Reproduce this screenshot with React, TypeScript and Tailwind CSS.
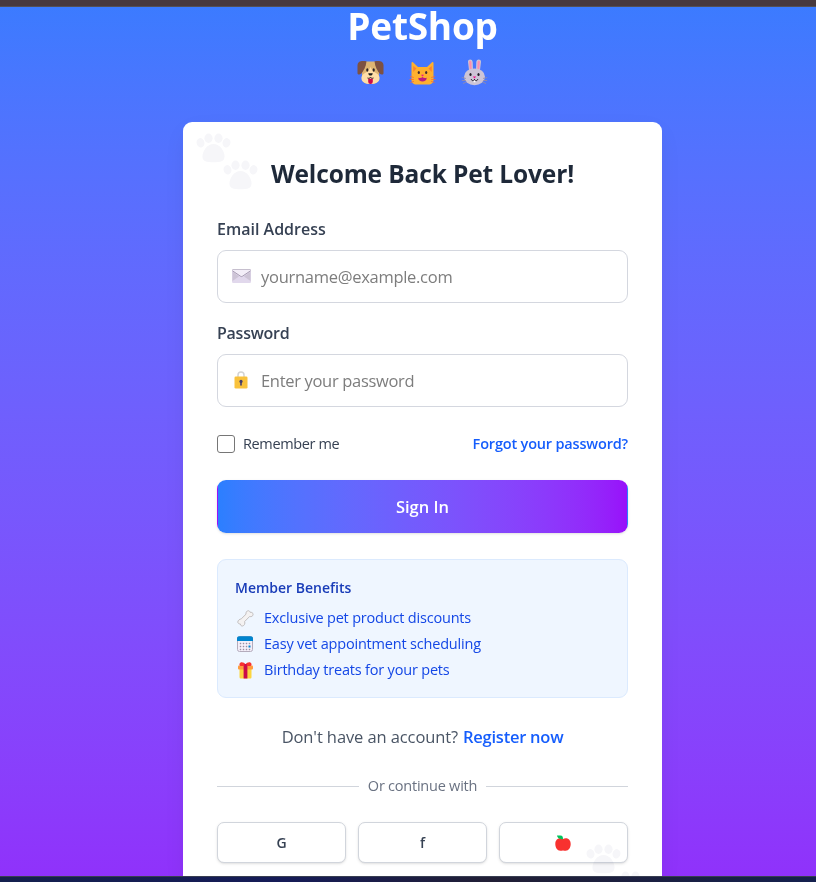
import type { ReactNode } from "react";

function Dog() {
  return (
    <svg className="h-[27px] w-[27px]" viewBox="0 0 27 27">
      <path d="M5 2.500h17v16c0 4.500-3 6.500-8.500 6.500S5 23 5 18.500z" fill="#deb573" />
      <path d="M13.500 8c-1.500 3.500-3 4.500-5.500 6-2.700 1.600-4 3.500-3.500 6 .6 3.500 4 5 9 5s8.400-1.500 9-5c.5-2.500-.8-4.400-3.500-6-2.500-1.500-4-2.500-5.500-6z" fill="#ffdea7" />
      <path d="M9.500 2.300C4 1.300.500 2.500.500 6.500v7.700c0 1.600 2.500 1.800 3.900.3C6.500 12 9 8 9.500 2.300z" fill="#7d5142" />
      <path d="M17.500 2.300c5.500-1 9 .2 9 4.200v7.700c0 1.600-2.500 1.800-3.900.3-2.100-2.500-4.600-6.500-5.100-12.200z" fill="#7d5142" />
      <ellipse cx="10.300" cy="11" rx="1.100" ry="1.700" fill="#292126" />
      <ellipse cx="16.700" cy="11" rx="1.100" ry="1.700" fill="#292126" />
      <path d="M11.300 14.300h4.400c0 1.500-1 2.300-2.200 2.300s-2.200-.8-2.200-2.300z" fill="#1c1c1c" />
      <path d="M10.500 19c1.300.6 2.400.3 3-.7.600 1 1.700 1.300 3 .7" stroke="#1c1c1c" strokeWidth="1" fill="none" />
      <path d="M11.200 19.700h4.600v3a2.300 2.300 0 0 1-4.600 0z" fill="#ca0b4a" />
    </svg>
  );
}

function Cat() {
  return (
    <svg className="h-[27px] w-[27px]" viewBox="0 0 27 27">
      <path d="M2.500 4c0-1 1-1.300 1.700-.6L9 8h9l4.800-4.600c.7-.7 1.700-.4 1.700.6v16.500c0 3.500-2 5-5 5h-12c-3 0-5-1.500-5-5z" fill="#ffb02e" />
      <path d="M4.200 7 7.500 9.500 4.200 13zM22.800 7l-3.300 2.500 3.300 3.500z" fill="#ff822d" />
      <path d="m1 17.500 3.800 1M.5 20.500h4.300M1.500 23.500l3.500-1.200M26 17.500l-3.800 1m4.300 2h-4.300m3.300 3-3.500-1.200" stroke="#f46a38" strokeWidth=".8" />
      <ellipse cx="9.800" cy="13.500" rx="1.100" ry="1.600" fill="#402a32" />
      <ellipse cx="17.200" cy="13.500" rx="1.100" ry="1.600" fill="#402a32" />
      <path d="M12 15.800h3l-1.500 1.700z" fill="#f70a8d" />
      <path d="M9.300 18.700c1.700.7 3.200.4 4.200-.6 1 1 2.500 1.300 4.200.6.300 5-8.700 5-8.400 0z" fill="#bb1d80" />
    </svg>
  );
}

function Rabbit() {
  return (
    <svg className="h-[27px] w-[27px]" viewBox="0 0 27 27">
      <path d="M7 2.700c0-3 4.500-3 4.700.3L12 11H8zM20 2.700c0-3-4.500-3-4.700.3L15 11h4z" fill="#cdc4d6" />
      <path d="M8.100 3.200c0-2 2.300-2 2.400.2l.2 7H8.800zM18.900 3.200c0-2-2.300-2-2.400.2l-.2 7h1.900z" fill="#ff8fae" />
      <ellipse cx="13.500" cy="17.800" rx="10.500" ry="8.400" fill="#cdc4d6" />
      <path d="m.8 18.500 4.200 1M.8 21.500H5M2 24.500l3.500-1.500m20.700-4.500-4.200 1m4.200 2H22m3 3-3.500-1.500" stroke="#998ea4" strokeWidth=".8" />
      <ellipse cx="9.500" cy="15.500" rx="1.100" ry="1.600" fill="#211c26" />
      <ellipse cx="17.500" cy="15.500" rx="1.100" ry="1.600" fill="#211c26" />
      <path d="M11.800 17.600h3.400l-1.700 2z" fill="#f70a8d" />
      <path d="M10.300 20c0 2.200 3.200 2.200 3.200 0 0 2.200 3.200 2.200 3.200 0" stroke="#211c26" strokeWidth="1" fill="none" />
      <path d="M12.600 21.600h1.800v1.700h-1.800z" fill="#fff" />
    </svg>
  );
}

function Paw() {
  return (
    <svg className="h-[30px] w-[35px]" viewBox="0 0 35 30">
      <g fill="#f6f6f9">
        <ellipse cx="4.500" cy="9.800" rx="3.900" ry="4.700" transform="rotate(-12 4.500 9.800)" />
        <ellipse cx="12.500" cy="5.200" rx="4.100" ry="4.700" />
        <ellipse cx="22.500" cy="5.200" rx="4.100" ry="4.700" />
        <ellipse cx="30.500" cy="9.800" rx="3.900" ry="4.700" transform="rotate(12 30.500 9.800)" />
        <path d="M17.500 11C11 11 6.500 18 6.500 23.500c0 5 4 5.700 11 5.700s11-.7 11-5.700C28.500 18 24 11 17.500 11z" />
      </g>
    </svg>
  );
}

function Envelope() {
  return (
    <svg className="h-[15px] w-[19px]" viewBox="0 0 19 15">
      <rect width="19" height="14" rx="1.300" fill="#e1d8ec" />
      <path d="M.5 2.500 7 7.500.5 12zM18.500 2.500 12 7.500l6.500 4.500z" fill="#cdc4d6" />
      <path d="M0 1.300C0 .5.500 0 1.300 0h16.400c.8 0 1.300.5 1.300 1.300L10.500 7c-.7.5-1.300.5-2 0z" fill="#f3eef8" />
      <path d="M.3 1.700 8.500 7.200c.7.500 1.300.5 2 0l8.200-5.500" stroke="#998ea4" strokeWidth=".8" fill="none" />
      <path d="M.5.400h18" stroke="#b4acbc" strokeWidth=".8" />
    </svg>
  );
}

function Lock() {
  return (
    <svg className="mr-px mb-px h-[18px] w-[14px]" viewBox="0 0 14 18">
      <path d="M4 7V4c0-4 6-4 6 0v3" stroke="#d3d3d3" strokeWidth="1.500" fill="none" />
      <rect x=".5" y="5.500" width="13" height="12" rx="1.300" fill="#f9c23c" />
      <circle cx="7" cy="10.400" r="1.600" fill="#433b6b" />
      <rect x="6.200" y="11" width="1.600" height="3.800" rx=".8" fill="#433b6b" />
    </svg>
  );
}

function Bone() {
  return (
    <svg className="h-[17px] w-[17px]" viewBox="0 0 17 17">
      <path d="M4.200 8.900 9 4.200C8.600 2.400 9.800.8 11.200.7c1 0 1.600.6 1.900 1.600 1.500-.2 3 .5 3 2 0 2-2 2.700-3.500 2.200L7.600 11.600c.8 1.900-.3 4.200-2.100 4.400-1.200.1-2-.6-2.100-2-1.600 0-2.600-.8-2.600-2 .1-1.800 1.900-2.800 3.400-3.100z" fill="#f4f2f2" stroke="#bcb8b8" strokeWidth=".9" />
    </svg>
  );
}

function Calendar() {
  return (
    <svg className="h-[16px] w-[16px]" viewBox="0 0 16 16">
      <rect x=".5" y=".5" width="15" height="15" rx="2" fill="#f3eef8" stroke="#b4acbc" strokeWidth="1" />
      <path d="M0 5V2.500C0 1 1 .3 2.500.3h11C15 .3 16 1 16 2.500V5z" fill="#0084ce" />
      <path d="M6 7h1v1H6zM9 7h1v1H9zM12 7h1v1h-1zM3 7h1v1H3zM3 10h1v1H3zM6 10h1v1H6zM9 10h1v1H9zM3 13h1v1H3zM6 13h1v1H6zM9 13h1v1H9zM12 13h1v1h-1z" fill="#998ea4" stroke="#998ea4" strokeWidth=".4" />
      <path d="M11.500 9.500h2v2h-2z" fill="#0084ce" />
    </svg>
  );
}

function Gift() {
  return (
    <svg className="h-[17px] w-[15px]" viewBox="0 0 15 17">
      <path d="M1.500 6h12v9c0 1-.5 1.500-1.500 1.500H3c-1 0-1.500-.5-1.500-1.500z" fill="#fcd53f" />
      <rect y="3.500" width="15" height="4" rx="1" fill="#ff9b3d" />
      <path d="M5.600 4h3.800v12.500H5.600z" fill="#ca0b4a" />
      <path d="M7.500 2.300C6-.1 2-.6 1.500 2c-.2 1.500.6 2 1.800 2h8.400c1.200 0 2-.5 1.800-2C13-.6 9-.1 7.500 2.300z" fill="#f8312f" />
      <path d="M6.300 2h2.400v2.500H6.300z" fill="#ca0b4a" />
    </svg>
  );
}

function Apple() {
  return (
    <svg className="mr-[2px] h-[16px] w-[16px]" viewBox="0 0 16 16">
      <path d="M8 4.100C10.500 2.300 15.700 3.300 15.700 9c0 3.500-2 6.700-5 6.700-1 0-1.700-.3-2.700-.3s-1.700.3-2.700.3c-3 0-5-3.200-5-6.700 0-5.700 5.200-6.700 7.700-4.900z" fill="#f8312f" />
      <path d="M2 .5h3.500C7.500.5 8 2 8 4.200 5 4.200 2.500 3.500 2 .5z" fill="#00c45c" />
    </svg>
  );
}

function Field({ label, labelClass, placeholder, inputClass, icon }: { label: string; labelClass: string; placeholder: string; inputClass: string; icon: ReactNode }) {
  return (
    <label className="block">
      <span className={`block h-[25px] text-[16px] leading-[25px] font-semibold text-[#364153] ${labelClass}`}>{label}</span>
      <span className="mt-2 flex h-[53px] items-center rounded-[9px] border border-[#d4d7df] pl-[12px]">
        <span className="flex w-[23px] justify-center">{icon}</span>
        <input className={`ml-[8px] h-[48px] min-w-0 flex-1 bg-transparent text-[16.500px] text-[#364153] outline-none placeholder:text-[#7d7d7d] ${inputClass}`} placeholder={placeholder} />
      </span>
    </label>
  );
}

function Benefit({ icon, children }: { icon: ReactNode; children: ReactNode }) {
  return (
    <li className="flex h-[26px] items-center">
      <span className="flex w-[20px] justify-center">{icon}</span>
      <span className="ml-[9px] text-[14.500px] tracking-[-0.19px] whitespace-nowrap text-[#1447e6]">{children}</span>
    </li>
  );
}

const social = "flex h-[41px] items-center justify-center rounded-[7px] border border-[#d1d5dc] bg-white text-[14px] font-semibold text-[#364153] shadow-sm";

export default function App() {
  return (
    <div className="flex h-[882px] w-full flex-col overflow-hidden font-['Open_Sans','Noto_Sans',sans-serif]">
      <div className="h-[7px] shrink-0 border-b border-[#555054] bg-[#48393d]" />
      <main className="h-[869px] shrink-0 bg-[linear-gradient(to_bottom_in_oklab,#2b7fff_-8%,#9810fa_118%)] pl-[183px]">
        <header className="flex h-[115px] w-[479px] flex-col items-center">
          <h1 className="-mt-[7px] h-[47px] text-[37px] leading-[51px] font-bold tracking-[-0.25px] text-white">PetShop</h1>
          <div className="mt-[12px] flex gap-[25px]">
            <Dog />
            <Cat />
            <Rabbit />
          </div>
        </header>
        <section className="relative h-[760px] w-[479px] overflow-hidden rounded-t-[9px] bg-white px-[34px] pt-[34px] shadow-[0_8px_24px_-4px_rgba(0,0,0,0.08)]">
          <div className="absolute top-[11px] left-[13px]"><Paw /></div>
          <div className="absolute top-[38px] left-[40px]"><Paw /></div>
          <h2 className="relative h-[38px] text-center text-[24.500px] leading-[36px] font-bold tracking-[-0.13px] whitespace-nowrap text-[#1e2939]">Welcome Back Pet Lover!</h2>
          <form className="mt-[23px]" onSubmit={(e) => e.preventDefault()}>
            <Field label="Email Address" labelClass="" placeholder="yourname@example.com" inputClass="tracking-[-0.28px]" icon={<Envelope />} />
            <div className="h-[18px]" />
            <Field label="Password" labelClass="tracking-[-0.25px]" placeholder="Enter your password" inputClass="tracking-[-0.32px]" icon={<Lock />} />
            <div className="mt-[24px] flex h-[26px] items-center justify-between text-[14.500px]">
              <label className="flex items-center gap-[8px] text-[#364153]">
                <input type="checkbox" className="h-[18px] w-[18px] appearance-none rounded-[3px] border border-[#767676] bg-white" />
                <span className="tracking-[-0.36px]">Remember me</span>
              </label>
              <a className="font-[550] tracking-[-0.18px] text-[#155dfc]">Forgot your password?</a>
            </div>
            <button className="mt-[23px] h-[53px] w-full rounded-[9px] border border-transparent bg-linear-to-r from-[#2b7fff] to-[#9810fa] pt-[2px] text-[16.500px] font-semibold text-white shadow-sm">Sign In</button>
          </form>
          <div className="mt-[26px] h-[139px] rounded-[9px] border border-[#dbeafe] bg-[#eff6ff] px-[17px] pt-[15px]">
            <h3 className="h-[30px] text-[14px] leading-[26px] font-semibold text-[#193cb8]">Member Benefits</h3>
            <ul>
              <Benefit icon={<Bone />}>Exclusive pet product discounts</Benefit>
              <Benefit icon={<Calendar />}>Easy vet appointment scheduling</Benefit>
              <Benefit icon={<Gift />}>Birthday treats for your pets</Benefit>
            </ul>
          </div>
          <p className="mt-[26px] flex h-[26px] items-center justify-center gap-[5px] text-[16.500px] whitespace-nowrap text-[#4a5565]">
            <span className="tracking-[-0.1px]">Don't have an account?</span>
            <a className="font-semibold tracking-[-0.25px] text-[#155dfc]">Register now</a>
          </p>
          <div className="mt-[25px] flex h-[22px] items-center gap-[9px]">
            <span className="h-px flex-1 bg-[#d1d5dc]" />
            <span className="text-[14.500px] tracking-[-0.23px] whitespace-nowrap text-[#6a7282]">Or continue with</span>
            <span className="h-px flex-1 bg-[#d1d5dc]" />
          </div>
          <div className="mt-[25px] grid grid-cols-3 gap-[12px]">
            <button className={social}>G</button>
            <button className={social}>f</button>
            <button className={social}><Apple /></button>
          </div>
          <div className="absolute top-[722px] left-[403px] mix-blend-multiply"><Paw /></div>
          <div className="absolute top-[749px] left-[430px] mix-blend-multiply"><Paw /></div>
        </section>
      </main>
      <footer className="relative z-10 h-[6px] shrink-0 border-t border-[#383e51] bg-[linear-gradient(to_right,#14204e,#151b57_35%,#211f35_60%,#14204e)]" />
    </div>
  );
}
